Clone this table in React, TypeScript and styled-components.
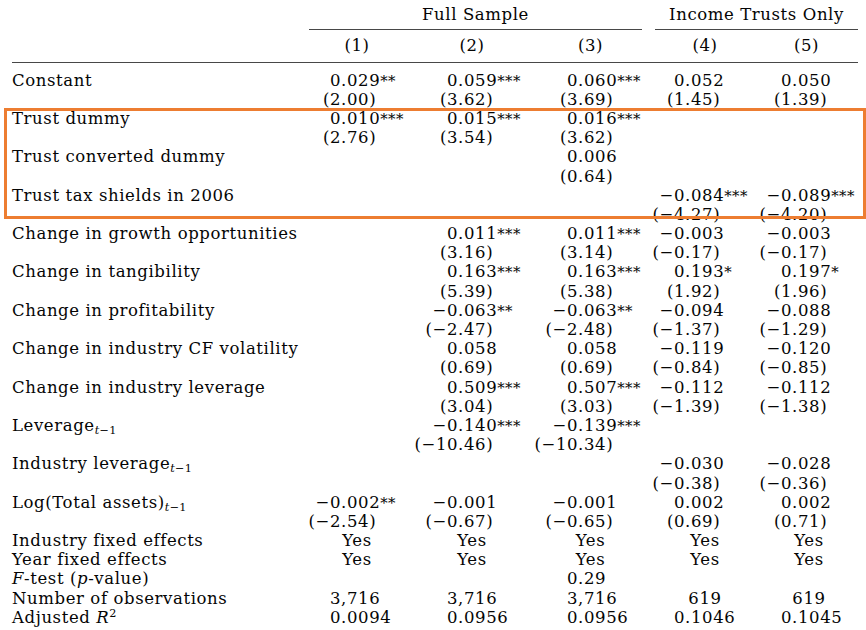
import React from 'react';
import styled, { createGlobalStyle } from 'styled-components';

const GlobalStyle = createGlobalStyle`
  html, body { margin: 0; padding: 0; background: #ffffff; }
  body {
    font-family: "DejaVu Serif", "Liberation Serif", serif;
    color: #050505;
  }
`;

const COLS = '297px 96px 134px 103px 13px 100px 103px';
const ANCHORS = [21, 42, 28, 19, 26];
const LINE = '#474747';

const Table = styled.div`
  width: 846px;
  padding-left: 12px;
  font-size: 16.5px;
  letter-spacing: 0.6px;
  white-space: nowrap;
`;

const HeadRow = styled.div`
  display: grid;
  grid-template-columns: ${COLS};
`;

const SpanHead = styled.div<{ $start: number; $span: number }>`
  grid-column: ${(p) => p.$start} / span ${(p) => p.$span};
  text-align: center;
  line-height: 29px;
  border-bottom: 1px solid ${LINE};
`;

const NumberHeadRow = styled(HeadRow)`
  border-bottom: 1px solid ${LINE};
`;

const ColHead = styled.div<{ $col: number }>`
  grid-column: ${(p) => p.$col};
  text-align: center;
  line-height: 32px;
`;

const Body = styled.div`
  padding-top: 7.6px;
`;

const Row = styled.div`
  display: grid;
  grid-template-columns: ${COLS};
  height: 19.2px;
  line-height: 19.2px;
`;

const Label = styled.div`
  grid-column: 1;
`;

const Cell = styled.div<{ $col: number }>`
  grid-column: ${(p) => p.$col};
  display: flex;
`;

const CenterCell = styled.div<{ $col: number; $shift?: number }>`
  grid-column: ${(p) => p.$col};
  text-align: center;
  padding-left: ${(p) => p.$shift ?? 0}px;
`;

const Pre = styled.span<{ $w: number }>`
  display: flex;
  justify-content: flex-end;
  flex: none;
  width: ${(p) => p.$w}px;
`;

const Stars = styled.span`
  font-size: 0.9em;
  letter-spacing: 0.4px;
`;

const Highlight = styled.div`
  position: relative;
  &::after {
    content: '';
    position: absolute;
    top: -0.5px;
    left: -8px;
    right: -8px;
    bottom: 5px;
    border: 3px solid #ed7d31;
    pointer-events: none;
  }
`;

const It = styled.i`
  font-style: italic;
`;

const Sub = styled.sub`
  font-size: 0.68em;
  line-height: 0;
  vertical-align: -0.28em;
  letter-spacing: 0.3px;
`;

const Sup = styled.sup`
  font-size: 0.68em;
  line-height: 0;
  vertical-align: 0.5em;
`;

const colFor = (i: number) => (i < 3 ? i + 2 : i + 3);

const Num: React.FC<{ v: string; i: number }> = ({ v, i }) => {
  if (!v) return null;
  const dot = v.indexOf('.');
  const cut = dot > 0 ? dot - 1 : v.search(/[0-9]/);
  const pre = v.slice(0, Math.max(cut, 0));
  const body = v.slice(Math.max(cut, 0));
  const star = body.indexOf('*');
  const main = star >= 0 ? body.slice(0, star) : body;
  const stars = star >= 0 ? body.slice(star) : '';
  return (
    <Cell $col={colFor(i)}>
      <Pre $w={ANCHORS[i]}>{pre}</Pre>
      <span>
        {main}
        {stars && <Stars>{stars}</Stars>}
      </span>
    </Cell>
  );
};

const Centered: React.FC<{ v: string; i: number }> = ({ v, i }) =>
  v ? (
    <CenterCell $col={colFor(i)} $shift={i === 4 ? 5 : 0}>
      {v}
    </CenterCell>
  ) : null;

type Line = { label?: React.ReactNode; vals: string[]; center?: boolean[] };

const Lines: React.FC<{ lines: Line[] }> = ({ lines }) => (
  <>
    {lines.map((ln, r) => (
      <Row key={r}>
        <Label>{ln.label}</Label>
        {ln.vals.map((v, i) =>
          ln.center && ln.center[i] ? (
            <Centered key={i} v={v} i={i} />
          ) : (
            <Num key={i} v={v} i={i} />
          )
        )}
      </Row>
    ))}
  </>
);

const pair = (label: React.ReactNode, coef: string[], t: string[]): Line[] => [
  { label, vals: coef },
  { vals: t },
];

const tm1 = (
  <Sub>
    <It>t</It>−1
  </Sub>
);

const top: Line[] = pair(
  'Constant',
  ['0.029**', '0.059***', '0.060***', '0.052', '0.050'],
  ['(2.00)', '(3.62)', '(3.69)', '(1.45)', '(1.39)']
);

const boxed: Line[] = [
  ...pair('Trust dummy', ['0.010***', '0.015***', '0.016***', '', ''], ['(2.76)', '(3.54)', '(3.62)', '', '']),
  ...pair('Trust converted dummy', ['', '', '0.006', '', ''], ['', '', '(0.64)', '', '']),
  ...pair('Trust tax shields in 2006', ['', '', '', '−0.084***', '−0.089***'], ['', '', '', '(−4.27)', '(−4.20)']),
];

const rest: Line[] = [
  ...pair('Change in growth opportunities', ['', '0.011***', '0.011***', '−0.003', '−0.003'], ['', '(3.16)', '(3.14)', '(−0.17)', '(−0.17)']),
  ...pair('Change in tangibility', ['', '0.163***', '0.163***', '0.193*', '0.197*'], ['', '(5.39)', '(5.38)', '(1.92)', '(1.96)']),
  ...pair('Change in profitability', ['', '−0.063**', '−0.063**', '−0.094', '−0.088'], ['', '(−2.47)', '(−2.48)', '(−1.37)', '(−1.29)']),
  ...pair('Change in industry CF volatility', ['', '0.058', '0.058', '−0.119', '−0.120'], ['', '(0.69)', '(0.69)', '(−0.84)', '(−0.85)']),
  ...pair('Change in industry leverage', ['', '0.509***', '0.507***', '−0.112', '−0.112'], ['', '(3.04)', '(3.03)', '(−1.39)', '(−1.38)']),
  ...pair(<>Leverage{tm1}</>, ['', '−0.140***', '−0.139***', '', ''], ['', '(−10.46)', '(−10.34)', '', '']),
  ...pair(<>Industry leverage{tm1}</>, ['', '', '', '−0.030', '−0.028'], ['', '', '', '(−0.38)', '(−0.36)']),
  ...pair(<>Log(Total assets){tm1}</>, ['−0.002**', '−0.001', '−0.001', '0.002', '0.002'], ['(−2.54)', '(−0.67)', '(−0.65)', '(0.69)', '(0.71)']),
  { label: 'Industry fixed effects', vals: ['Yes', 'Yes', 'Yes', 'Yes', 'Yes'], center: [true, true, true, true, true] },
  { label: 'Year fixed effects', vals: ['Yes', 'Yes', 'Yes', 'Yes', 'Yes'], center: [true, true, true, true, true] },
  { label: <><It>F</It>-test (<It>p</It>-value)</>, vals: ['', '', '0.29', '', ''] },
  { label: 'Number of observations', vals: ['3,716', '3,716', '3,716', '619', '619'], center: [false, false, false, true, true] },
  { label: <>Adjusted <It>R</It><Sup>2</Sup></>, vals: ['0.0094', '0.0956', '0.0956', '0.1046', '0.1045'] },
];

export default function App() {
  return (
    <>
      <GlobalStyle />
      <Table>
        <HeadRow>
          <SpanHead $start={2} $span={3}>Full Sample</SpanHead>
          <SpanHead $start={6} $span={2}>Income Trusts Only</SpanHead>
        </HeadRow>
        <NumberHeadRow>
          {[1, 2, 3, 4, 5].map((n, i) => (
            <ColHead key={n} $col={colFor(i)}>({n})</ColHead>
          ))}
        </NumberHeadRow>
        <Body>
          <Lines lines={top} />
          <Highlight>
            <Lines lines={boxed} />
          </Highlight>
          <Lines lines={rest} />
        </Body>
      </Table>
    </>
  );
}
